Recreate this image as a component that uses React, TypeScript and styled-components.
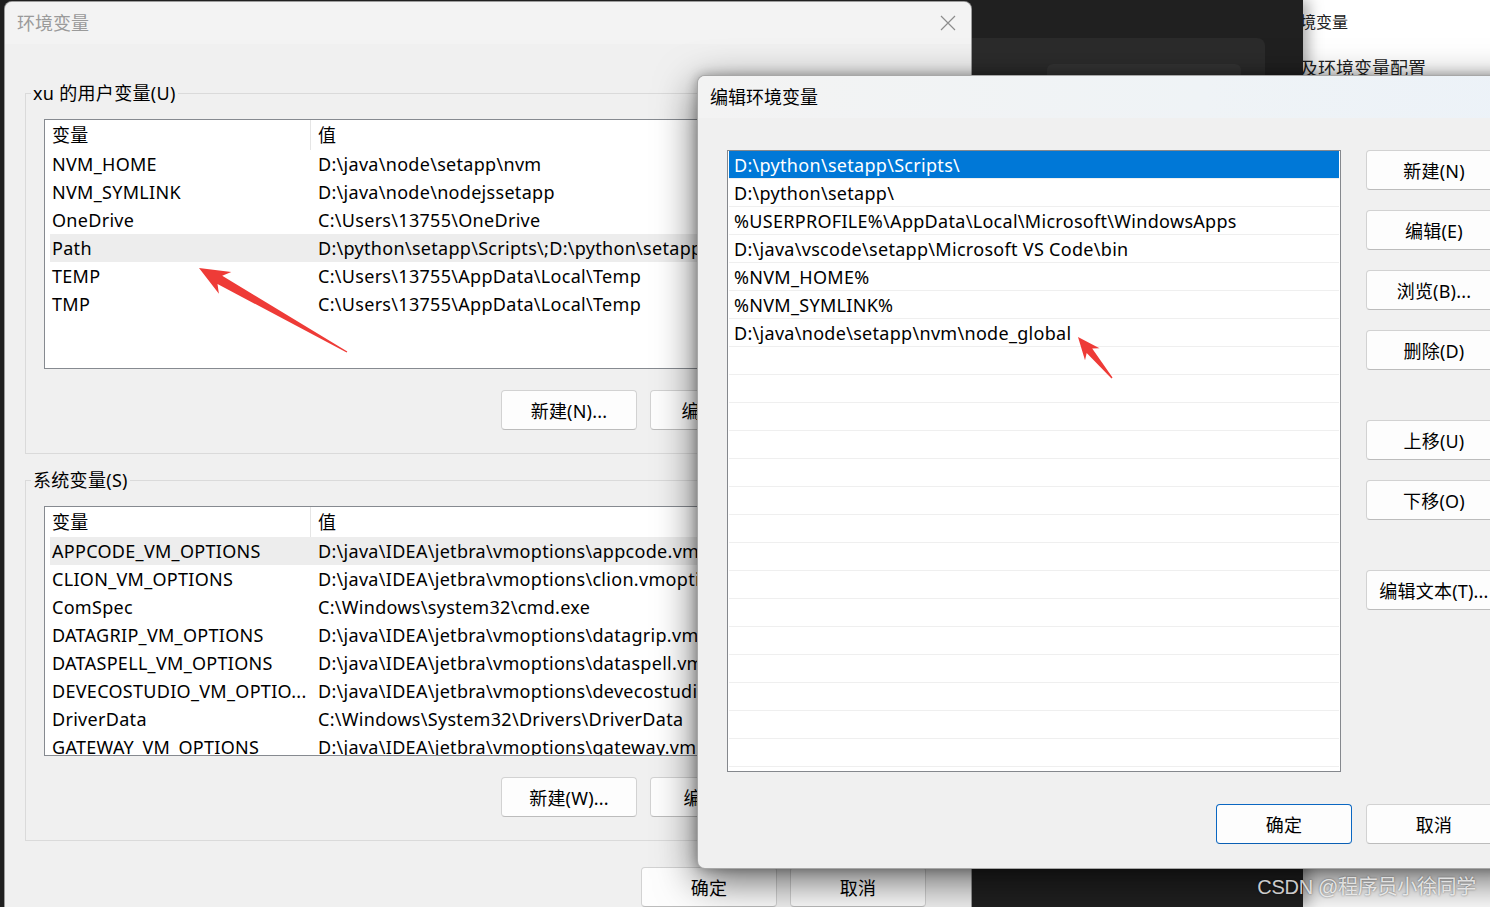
import React from 'react';
import styled, { createGlobalStyle } from 'styled-components';

const uiFont = `"Noto Sans", "Noto Sans CJK SC", sans-serif`;

const userVars: [string, string][] = [
  ['NVM_HOME', 'D:\\java\\node\\setapp\\nvm'],
  ['NVM_SYMLINK', 'D:\\java\\node\\nodejssetapp'],
  ['OneDrive', 'C:\\Users\\13755\\OneDrive'],
  ['Path', 'D:\\python\\setapp\\Scripts\\;D:\\python\\setapp\\;%USERPROFILE%\\AppData'],
  ['TEMP', 'C:\\Users\\13755\\AppData\\Local\\Temp'],
  ['TMP', 'C:\\Users\\13755\\AppData\\Local\\Temp'],
];

const sysVars: [string, string][] = [
  ['APPCODE_VM_OPTIONS', 'D:\\java\\IDEA\\jetbra\\vmoptions\\appcode.vmoptions'],
  ['CLION_VM_OPTIONS', 'D:\\java\\IDEA\\jetbra\\vmoptions\\clion.vmoptions'],
  ['ComSpec', 'C:\\Windows\\system32\\cmd.exe'],
  ['DATAGRIP_VM_OPTIONS', 'D:\\java\\IDEA\\jetbra\\vmoptions\\datagrip.vmoptions'],
  ['DATASPELL_VM_OPTIONS', 'D:\\java\\IDEA\\jetbra\\vmoptions\\dataspell.vmoptions'],
  ['DEVECOSTUDIO_VM_OPTIO...', 'D:\\java\\IDEA\\jetbra\\vmoptions\\devecostudio.vmoptions'],
  ['DriverData', 'C:\\Windows\\System32\\Drivers\\DriverData'],
  ['GATEWAY_VM_OPTIONS', 'D:\\java\\IDEA\\jetbra\\vmoptions\\gateway.vmoptions'],
];

const pathEntries = [
  'D:\\python\\setapp\\Scripts\\',
  'D:\\python\\setapp\\',
  '%USERPROFILE%\\AppData\\Local\\Microsoft\\WindowsApps',
  'D:\\java\\vscode\\setapp\\Microsoft VS Code\\bin',
  '%NVM_HOME%',
  '%NVM_SYMLINK%',
  'D:\\java\\node\\setapp\\nvm\\node_global',
];

// empty rows keep the list ruled down to its bottom edge
const pathRows = [...pathEntries, ...Array(16).fill('')];

// tapered snip-tool style arrow, tail (x1,y1) -> tip (x2,y2)
const arrowPoints = (x1: number, y1: number, x2: number, y2: number) => {
  const dx = x2 - x1;
  const dy = y2 - y1;
  const len = Math.hypot(dx, dy);
  const ux = dx / len;
  const uy = dy / len;
  const nx = -uy;
  const ny = ux;
  const head = Math.min(30, len * 0.42);
  const wing = head * 0.42;
  const neck = head * 0.16;
  const p = (a: number, b: number) =>
    `${(x1 + ux * a + nx * b).toFixed(1)},${(y1 + uy * a + ny * b).toFixed(1)}`;
  return [
    p(0, 0.6),
    p(len - head * 0.8, neck),
    p(len - head, wing),
    p(len, 0),
    p(len - head, -wing),
    p(len - head * 0.8, -neck),
    p(0, -0.6),
  ].join(' ');
};

const App: React.FC = () => {
  return (
    <Desktop>
      <GlobalStyle />

      <BrowserWindow>
        <ArticleLine $size={16} $indent={34}>环境变量</ArticleLine>
        <ArticleLine $size={18} $indent={14}>安装及环境变量配置</ArticleLine>
      </BrowserWindow>

      <DarkApp>
        <DarkPanel>
          <DarkCard />
        </DarkPanel>
      </DarkApp>

      <MainDialog>
        <TitleBar>
          <TitleText $inactive>环境变量</TitleText>
          <svg width="16" height="16" viewBox="0 0 16 16">
            <path d="M1 1 L15 15 M15 1 L1 15" stroke="#8c8c8c" strokeWidth="1.2" fill="none" />
          </svg>
        </TitleBar>

        <DialogBody>
          <Group>
            <GroupLabel>xu 的用户变量(U)</GroupLabel>
            <ListView>
              <ListHeader>
                <HeaderCell $first>变量</HeaderCell>
                <HeaderCell>值</HeaderCell>
              </ListHeader>
              <ListRows>
                {userVars.map(([name, value], i) => (
                  <VarRow key={name} $selected={i === 3}>
                    <NameCell>{name}</NameCell>
                    <ValueCell>{value}</ValueCell>
                  </VarRow>
                ))}
              </ListRows>
            </ListView>
            <ButtonRow>
              <Button>新建(N)...</Button>
              <Button>编辑(E)...</Button>
              <Button>删除(D)</Button>
            </ButtonRow>
          </Group>

          <Group $spaced>
            <GroupLabel>系统变量(S)</GroupLabel>
            <ListView>
              <ListHeader>
                <HeaderCell $first>变量</HeaderCell>
                <HeaderCell>值</HeaderCell>
              </ListHeader>
              <ListRows>
                {sysVars.map(([name, value], i) => (
                  <VarRow key={name} $selected={i === 0}>
                    <NameCell>{name}</NameCell>
                    <ValueCell>{value}</ValueCell>
                  </VarRow>
                ))}
              </ListRows>
            </ListView>
            <ButtonRow>
              <Button>新建(W)...</Button>
              <Button>编辑(I)...</Button>
              <Button>删除(L)</Button>
            </ButtonRow>
          </Group>

          <DialogFooter>
            <Button>确定</Button>
            <Button>取消</Button>
          </DialogFooter>
        </DialogBody>
      </MainDialog>

      <EditDialog>
        <EditTitleBar>
          <TitleText>编辑环境变量</TitleText>
        </EditTitleBar>
        <EditBody>
          <PathList>
            {pathRows.map((entry, i) => (
              <PathRow key={i} $selected={i === 0}>
                {entry}
              </PathRow>
            ))}
          </PathList>
          <SideButtons>
            <Button>新建(N)</Button>
            <Button>编辑(E)</Button>
            <Button>浏览(B)...</Button>
            <Button>删除(D)</Button>
            <StackGap />
            <Button>上移(U)</Button>
            <Button>下移(O)</Button>
            <StackGap />
            <Button>编辑文本(T)...</Button>
          </SideButtons>
          <EditFooter>
            <Button $primary>确定</Button>
            <Button>取消</Button>
          </EditFooter>
        </EditBody>
      </EditDialog>

      <Annotations width="1490" height="907" viewBox="0 0 1490 907">
        <polygon points={arrowPoints(347, 352, 199, 268)} fill="#ee3b37" />
        <polygon points={arrowPoints(1112, 378, 1078, 337)} fill="#ee3b37" />
      </Annotations>

      <Watermark>CSDN @程序员小徐同学</Watermark>
    </Desktop>
  );
};

const GlobalStyle = createGlobalStyle`
  html, body {
    margin: 0;
    padding: 0;
    background: #202020;
  }
  body {
    overflow: hidden;
    font-family: ${uiFont};
  }
`;

const Desktop = styled.div`
  position: relative;
  width: 1490px;
  height: 907px;
  overflow: hidden;
  background: #202020;
  font-family: ${uiFont};
  font-size: 18px;
  letter-spacing: 0.3px;
  color: #000;
`;

const BrowserWindow = styled.div`
  position: absolute;
  left: 1250px;
  top: 0;
  width: 320px;
  height: 907px;
  background: #ffffff;
  display: flex;
  flex-direction: column;
  gap: 22px;
  padding-top: 10px;
  box-sizing: border-box;
`;

const ArticleLine = styled.div<{ $size: number; $indent: number }>`
  padding-left: ${(p) => p.$indent}px;
  font-size: ${(p) => p.$size}px;
  line-height: 24px;
  letter-spacing: 0;
  color: #222;
  white-space: nowrap;
`;

const DarkApp = styled.div`
  position: absolute;
  left: 900px;
  top: 0;
  width: 403px;
  height: 907px;
  background: #202020;
  box-shadow: 5px 0 14px rgba(0, 0, 0, 0.35);
  padding-top: 38px;
  box-sizing: border-box;
`;

const DarkPanel = styled.div`
  width: 365px;
  height: 160px;
  background: #2b2b2b;
  border-radius: 0 8px 0 0;
  padding: 26px 0 0 147px;
  box-sizing: border-box;
`;

const DarkCard = styled.div`
  width: 194px;
  height: 80px;
  background: #333333;
  border-radius: 6px 6px 0 0;
`;

const MainDialog = styled.div`
  position: absolute;
  left: 4px;
  top: 1px;
  width: 968px;
  height: 960px;
  background: #f0f0f0;
  border: 1px solid rgba(0, 0, 0, 0.35);
  border-radius: 8px 8px 0 0;
  box-sizing: border-box;
  display: flex;
  flex-direction: column;
  overflow: hidden;
`;

const TitleBar = styled.div`
  height: 42px;
  flex: none;
  display: flex;
  align-items: center;
  justify-content: space-between;
  padding: 0 15px 0 12px;
  background: #f3f3f3;
`;

const TitleText = styled.div<{ $inactive?: boolean }>`
  font-size: 18px;
  line-height: 24px;
  letter-spacing: 0;
  color: ${(p) => (p.$inactive ? '#9a9a9a' : '#000')};
`;

const DialogBody = styled.div`
  display: flex;
  flex-direction: column;
  padding: 49px 20px 0 20px;
`;

const Group = styled.div<{ $spaced?: boolean }>`
  position: relative;
  border: 1px solid #dadada;
  margin-top: ${(p) => (p.$spaced ? 26 : 0)}px;
  padding: 25px 15px 23px 18px;
  display: flex;
  flex-direction: column;
  gap: 21px;
`;

const GroupLabel = styled.div`
  position: absolute;
  top: -13px;
  left: 5px;
  padding: 0 2px;
  background: #f0f0f0;
  line-height: 24px;
  white-space: nowrap;
`;

const ListView = styled.div`
  height: 250px;
  background: #ffffff;
  border: 1px solid #868a90;
  box-sizing: border-box;
  overflow: hidden;
`;

const ListHeader = styled.div`
  display: flex;
  height: 30px;
`;

const HeaderCell = styled.div<{ $first?: boolean }>`
  display: flex;
  align-items: center;
  width: ${(p) => (p.$first ? '266px' : 'auto')};
  padding-left: 7px;
  box-sizing: border-box;
  border-right: ${(p) => (p.$first ? '1px solid #e5e5e5' : 'none')};
  line-height: 24px;
`;

const ListRows = styled.div`
  padding-left: 5px;
`;

const VarRow = styled.div<{ $selected?: boolean }>`
  display: flex;
  align-items: center;
  height: 28px;
  background: ${(p) => (p.$selected ? '#ededed' : 'transparent')};
  white-space: nowrap;
`;

const NameCell = styled.div`
  width: 261px;
  flex: none;
  padding-left: 2px;
  box-sizing: border-box;
  overflow: hidden;
`;

const ValueCell = styled.div`
  padding-left: 7px;
`;

const ButtonRow = styled.div`
  display: flex;
  justify-content: flex-end;
  gap: 13px;
`;

const Button = styled.button<{ $primary?: boolean }>`
  width: 136px;
  height: 40px;
  flex: none;
  padding: 0;
  font-family: ${uiFont};
  font-size: 18px;
  letter-spacing: 0.2px;
  color: #000;
  background: #fdfdfd;
  border: 1px solid ${(p) => (p.$primary ? '#0a67c2' : '#d2d2d2')};
  border-bottom-color: ${(p) => (p.$primary ? '#0a5fb4' : '#bcbcbc')};
  border-radius: 4px;
  white-space: nowrap;
`;

const DialogFooter = styled.div`
  display: flex;
  justify-content: flex-end;
  gap: 13px;
  margin-top: 26px;
  padding-right: 25px;
`;

const EditDialog = styled.div`
  position: absolute;
  left: 697px;
  top: 75px;
  width: 840px;
  height: 794px;
  background: #f0f0f0;
  border: 1px solid rgba(0, 0, 0, 0.3);
  border-radius: 8px;
  box-sizing: border-box;
  box-shadow: 0 12px 40px rgba(0, 0, 0, 0.6), 0 0 12px rgba(0, 0, 0, 0.3);
  display: flex;
  flex-direction: column;
  overflow: hidden;
`;

const EditTitleBar = styled.div`
  height: 42px;
  flex: none;
  display: flex;
  align-items: center;
  padding-left: 12px;
  background: linear-gradient(90deg, #f3f3f3 0%, #eff3f6 60%, #ecf2f8 100%);
`;

const EditBody = styled.div`
  display: grid;
  grid-template-columns: 614px 136px;
  column-gap: 25px;
  row-gap: 32px;
  padding: 32px 0 0 29px;
`;

const PathList = styled.div`
  height: 622px;
  background: #ffffff;
  border: 1px solid #85888d;
  padding: 0 1px;
  box-sizing: border-box;
  overflow: hidden;
`;

const PathRow = styled.div<{ $selected?: boolean }>`
  height: 28px;
  box-sizing: border-box;
  display: flex;
  align-items: center;
  padding-left: 5px;
  border-bottom: 1px solid #efefef;
  background: ${(p) => (p.$selected ? '#0078d7' : 'transparent')};
  color: ${(p) => (p.$selected ? '#ffffff' : '#000')};
  white-space: nowrap;
`;

const SideButtons = styled.div`
  display: flex;
  flex-direction: column;
  gap: 20px;
`;

const StackGap = styled.div`
  height: 10px;
`;

const EditFooter = styled.div`
  grid-column: 1 / -1;
  justify-self: end;
  display: flex;
  gap: 14px;
`;

const Annotations = styled.svg`
  position: absolute;
  left: 0;
  top: 0;
  pointer-events: none;
`;

const Watermark = styled.div`
  position: absolute;
  right: 14px;
  bottom: 7px;
  font-family: "Liberation Sans", "Noto Sans CJK SC", sans-serif;
  font-size: 20px;
  line-height: 26px;
  letter-spacing: -0.3px;
  color: rgba(255, 255, 255, 0.8);
  text-shadow: 0 0 2px rgba(0, 0, 0, 0.55);
  white-space: nowrap;
`;

export default App;
